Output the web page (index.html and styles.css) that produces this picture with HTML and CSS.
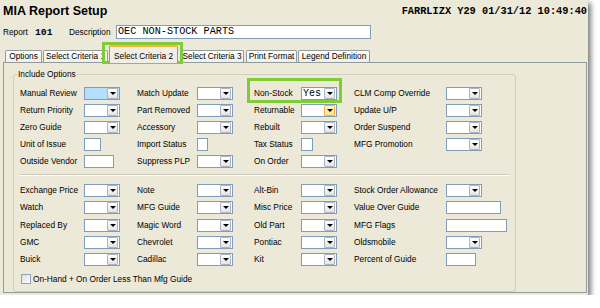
FILE: index.html
```html
<!DOCTYPE html>
<html>
<head>
<meta charset="utf-8">
<link rel="stylesheet" href="styles.css">
</head>
<body>
<div class="win">
  <div class="hdr">
    <h1 class="title">MIA Report Setup</h1>
    <div class="stamp">FARRLIZX Y29 01/31/12 10:49:40</div>
  </div>
  <div class="rep">
    <span class="rep-lbl">Report</span>
    <span class="rep-num">101</span>
    <span class="rep-desc">Description</span>
    <span class="rep-input">OEC NON-STOCK PARTS</span>
  </div>
  <div class="tabs">
    <div class="tab t-opt">Options</div>
    <div class="tab t-sc1">Select Criteria 1</div>
    <div class="tab active t-sc2">Select Criteria 2</div>
    <div class="tab t-sc3">Select Criteria 3</div>
    <div class="tab t-pf">Print Format</div>
    <div class="tab t-ld">Legend Definition</div>
  </div>
  <div class="panel">
    <fieldset class="grp">
      <legend>Include Options</legend>
      <div class="grid">
        <span class="lbl">Manual Review</span><span class="dd sel"><span class="dd-btn"></span></span>
        <span class="lbl">Match Update</span><span class="dd"><span class="dd-btn"></span></span>
        <span class="lbl">Non-Stock</span><span class="dd"><span class="dd-val">Yes</span><span class="dd-btn"></span></span>
        <span class="lbl">CLM Comp Override</span><span class="dd"><span class="dd-btn"></span></span>

        <span class="lbl">Return Priority</span><span class="dd"><span class="dd-btn"></span></span>
        <span class="lbl">Part Removed</span><span class="dd"><span class="dd-btn"></span></span>
        <span class="lbl">Returnable</span><span class="dd"><span class="dd-btn hot"></span></span>
        <span class="lbl">Update U/P</span><span class="dd"><span class="dd-btn"></span></span>

        <span class="lbl">Zero Guide</span><span class="dd"><span class="dd-btn"></span></span>
        <span class="lbl">Accessory</span><span class="dd"><span class="dd-btn"></span></span>
        <span class="lbl">Rebuilt</span><span class="dd"><span class="dd-btn"></span></span>
        <span class="lbl">Order Suspend</span><span class="dd"><span class="dd-btn"></span></span>

        <span class="lbl">Unit of Issue</span><span class="txt w17"></span>
        <span class="lbl">Import Status</span><span class="txt w11"></span>
        <span class="lbl">Tax Status</span><span class="txt w12"></span>
        <span class="lbl">MFG Promotion</span><span class="dd"><span class="dd-btn"></span></span>

        <span class="lbl">Outside Vendor</span><span class="txt w30"></span>
        <span class="lbl">Suppress PLP</span><span class="dd"><span class="dd-btn"></span></span>
        <span class="lbl">On Order</span><span class="dd"><span class="dd-btn"></span></span>
        <span class="lbl"></span><span></span>
      </div>
      <div class="sep"></div>
      <div class="grid grid-b">
        <span class="lbl">Exchange Price</span><span class="dd"><span class="dd-btn"></span></span>
        <span class="lbl">Note</span><span class="dd"><span class="dd-btn"></span></span>
        <span class="lbl">Alt-Bin</span><span class="dd"><span class="dd-btn"></span></span>
        <span class="lbl">Stock Order Allowance</span><span class="dd"><span class="dd-btn"></span></span>

        <span class="lbl">Watch</span><span class="dd"><span class="dd-btn"></span></span>
        <span class="lbl">MFG Guide</span><span class="dd"><span class="dd-btn"></span></span>
        <span class="lbl">Misc Price</span><span class="dd"><span class="dd-btn"></span></span>
        <span class="lbl">Value Over Guide</span><span class="txt w55"></span>

        <span class="lbl">Replaced By</span><span class="dd"><span class="dd-btn"></span></span>
        <span class="lbl">Magic Word</span><span class="dd"><span class="dd-btn"></span></span>
        <span class="lbl">Old Part</span><span class="dd"><span class="dd-btn"></span></span>
        <span class="lbl">MFG Flags</span><span class="txt w61"></span>

        <span class="lbl">GMC</span><span class="dd"><span class="dd-btn"></span></span>
        <span class="lbl">Chevrolet</span><span class="dd"><span class="dd-btn"></span></span>
        <span class="lbl">Pontiac</span><span class="dd"><span class="dd-btn"></span></span>
        <span class="lbl">Oldsmobile</span><span class="dd"><span class="dd-btn"></span></span>

        <span class="lbl">Buick</span><span class="dd"><span class="dd-btn"></span></span>
        <span class="lbl">Cadillac</span><span class="dd"><span class="dd-btn"></span></span>
        <span class="lbl">Kit</span><span class="dd"><span class="dd-btn"></span></span>
        <span class="lbl">Percent of Guide</span><span class="txt w30"></span>
      </div>
      <label class="chk"><span class="chk-box"></span>On-Hand + On Order Less Than Mfg Guide</label>
    </fieldset>
  </div>
  <div class="hl hl-tab"></div>
  <div class="hl hl-ns"></div>
</div>
</body>
</html>
```
FILE: styles.css
```css
* { box-sizing: border-box; }
body {
  margin: 0;
  background: #fff;
  font-family: "Liberation Sans", Arial, sans-serif;
  font-size: 8.3px;
  color: #000;
}
.win {
  position: relative;
  width: 588px;
  height: 295px;
  background: #ECE9D8;
  box-shadow: 3px 3px 5px rgba(0,0,0,0.5);
}
.hdr {
  display: flex;
  justify-content: space-between;
  align-items: flex-start;
  height: 25px;
  padding: 4px 1px 0 3px;
}
.title {
  margin: 0;
  font-size: 12.5px;
  line-height: 15px;
  font-weight: bold;
}
.stamp {
  margin-top: 1px;
  font-family: "Liberation Mono", "Courier New", monospace;
  font-weight: bold;
  font-size: 10.3px;
  line-height: 12px;
  white-space: nowrap;
}
.rep {
  display: flex;
  align-items: center;
  height: 14px;
  padding-left: 3px;
}
.rep-lbl { width: 32px; }
.rep-num {
  width: 34px;
  font-family: "Liberation Mono", "Courier New", monospace;
  font-weight: bold;
  font-size: 9.7px;
}
.rep-desc { width: 47px; }
.rep-input {
  width: 255px;
  height: 14px;
  border: 1px solid #7F9DB9;
  background: #fff;
  padding-left: 1px;
  font-family: "Liberation Mono", "Courier New", monospace;
  font-size: 10.2px;
  line-height: 12px;
  white-space: nowrap;
}
.tabs {
  display: flex;
  align-items: flex-end;
  height: 17px;
  margin-top: 6px;
  padding-left: 5px;
}
.tab {
  height: 12px;
  line-height: 11px;
  text-align: center;
  white-space: nowrap;
  overflow: hidden;
  border: 1px solid #919B9C;
  border-bottom: none;
  border-radius: 2px 2px 0 0;
  background: linear-gradient(#FEFEFE, #F0EFE8);
  margin-right: 1px;
}
.tab.active {
  position: relative;
  z-index: 1;
  height: 18px;
  margin-bottom: -1px;
  padding-top: 4px;
  background: #F1EFE5;
  border-top: 2px solid #F5B43A;
  margin-right: 2px;
}
.t-opt { width: 37px; }
.t-sc1 { width: 65px; }
.t-sc2 { width: 69px; }
.t-sc3 { width: 64px; margin-right: 2px; }
.t-pf { width: 51px; }
.t-ld { width: 72px; }
.panel {
  margin-left: 3px;
  width: 584px;
  height: 231px;
  border: 1px solid #919B9C;
  padding: 6px 0 0 9px;
}
.grp {
  margin: 0;
  width: 503px;
  border: 1px solid #D0D0BF;
  border-radius: 3px;
  padding: 6px 6px 4px 6px;
}
.grp legend {
  margin-left: -3px;
  padding: 0 1px;
  line-height: 10px;
}
.grid {
  display: grid;
  grid-template-columns: 64px 53px 60px 57px 47px 53px 92px auto;
  grid-auto-rows: 17px;
  align-items: center;
}
.grid-b {
  grid-auto-rows: 17.25px;
  margin-top: 6px;
}
.lbl { white-space: nowrap; line-height: 17px; }
.dd {
  display: flex;
  align-items: center;
  width: 36px;
  height: 13px;
  border: 1px solid #7F9DB9;
  background: #fff;
  padding-right: 1px;
}
.dd.sel { background: #B3DFFD; }
.dd-val {
  flex: 1;
  padding-left: 1px;
  font-family: "Liberation Mono", "Courier New", monospace;
  font-size: 10px;
  line-height: 11px;
}
.dd-btn {
  margin-left: auto;
  width: 11px;
  height: 11px;
  border: 1px solid #A9B4C8;
  border-radius: 1px;
  background: linear-gradient(#FFFFFF, #E4E4E0);
  display: flex;
  align-items: center;
  justify-content: center;
}
.dd-btn::after {
  content: "";
  width: 0;
  height: 0;
  border-left: 3px solid transparent;
  border-right: 3px solid transparent;
  border-top: 3px solid #000;
}
.dd-btn.hot {
  background: linear-gradient(#FFF6C8, #FCE38A);
  border-color: #F0B050;
}
.txt {
  height: 13px;
  border: 1px solid #7F9DB9;
  background: #fff;
}
.w11 { width: 11px; }
.w12 { width: 12px; }
.w17 { width: 17px; }
.w30 { width: 30px; }
.w55 { width: 55px; }
.w61 { width: 61px; }
.sep {
  margin-top: 4px;
  height: 2px;
  border-top: 1px solid #CAC8BB;
  border-bottom: 1px solid #FFFFFF;
}
.chk {
  display: flex;
  align-items: center;
  height: 17px;
  margin-top: 2px;
  padding-left: 1px;
}
.chk-box {
  width: 10px;
  height: 10px;
  margin-right: 2px;
  border: 1px solid #8FA4BC;
  background: linear-gradient(135deg, #DCDCD6, #FFFFFF);
}
.hl {
  position: absolute;
  border: 3px solid #7FCC36;
}
.hl-tab { left: 102px; top: 42px; width: 81px; height: 22px; }
.hl-ns { left: 247px; top: 78px; width: 95px; height: 25px; }
```
